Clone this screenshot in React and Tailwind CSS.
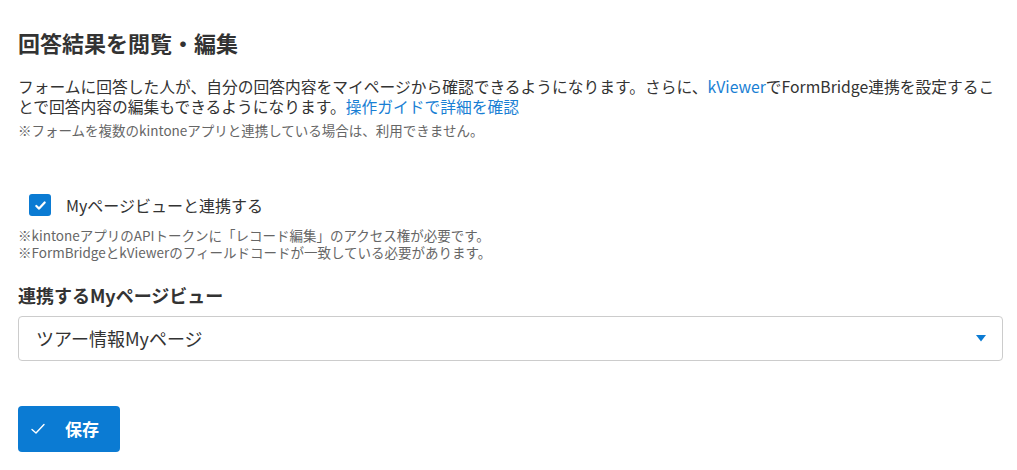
import { useState } from "react";

export default function App() {
  const [linked, setLinked] = useState(true);
  const [view, setView] = useState("tour");

  return (
    <div
      className="min-h-screen bg-white pl-[18px] pr-[14px] pt-[26px] text-[#333333]"
      style={{ fontFamily: '"Noto Sans CJK JP", "Noto Sans", sans-serif' }}
    >
      <h2 className="text-[22px] font-bold leading-[32px]">回答結果を閲覧・編集</h2>

      <p className="mt-[19px] text-[15.75px] leading-[20px]">
        フォームに回答した人が、自分の回答内容をマイページから確認できるようになります。さらに、
        <a className="text-[#1a7fd4]">kViewer</a>
        でFormBridge連携を設定することで回答内容の編集もできるようになります。
        <a className="text-[#1a7fd4]">操作ガイドで詳細を確認</a>
      </p>
      <p className="mt-[4px] text-[13.5px] leading-[18px] text-[#666666]">
        ※フォームを複数のkintoneアプリと連携している場合は、利用できません。
      </p>

      {/* Myページ連携 */}
      <label className="mt-[55px] ml-[11px] flex items-center gap-[15px] cursor-pointer">
        <span
          onClick={() => setLinked(!linked)}
          className={
            linked
              ? "flex h-[22px] w-[22px] items-center justify-center rounded-[3px] bg-[#0b7bd3]"
              : "flex h-[22px] w-[22px] items-center justify-center rounded-[3px] border border-gray-400 bg-white"
          }
        >
          {linked && (
            <svg width="13" height="13" viewBox="0 0 14 14" fill="none">
              <path d="M2.5 7.5 L5.5 10.3 L11.5 3.8" stroke="white" strokeWidth="2.4" strokeLinecap="round" strokeLinejoin="round" />
            </svg>
          )}
        </span>
        <span className="text-[16px] leading-[22px]">Myページビューと連携する</span>
      </label>

      <div className="mt-[11px] text-[13.5px] leading-[17px] text-[#666666]">
        <p>※kintoneアプリのAPIトークンに「レコード編集」のアクセス権が必要です。</p>
        <p>※FormBridgeとkViewerのフィールドコードが一致している必要があります。</p>
      </div>

      <h3 className="mt-[21px] text-[18px] font-bold leading-[26px]">連携するMyページビュー</h3>

      <div className="relative mt-[8px]">
        <select
          value={view}
          onChange={(e) => setView(e.target.value)}
          className="h-[45px] w-full appearance-none rounded-[4px] border border-[#cccccc] bg-white pl-[17px] pr-10 text-[18px] text-[#333333] focus:outline-none"
          style={{ fontFamily: '"Noto Sans CJK JP", sans-serif' }}
        >
          <option value="tour">ツアー情報Myページ</option>
        </select>
        <svg
          className="pointer-events-none absolute right-[17px] top-[19px]"
          width="10"
          height="7"
          viewBox="0 0 10 7"
        >
          <path d="M0 0 H10 L5 6.5 Z" fill="#0b7bd3" />
        </svg>
      </div>

      <button
        type="button"
        className="mt-[45px] flex h-[46px] w-[102px] items-center rounded-[4px] bg-[#0b7bd3] pl-[13px] text-white"
      >
        <svg width="14" height="12" viewBox="0 0 14 12" fill="none">
          <path d="M1 6.5 L5 10 L13 1.5" stroke="white" strokeWidth="1.4" strokeLinecap="round" strokeLinejoin="round" />
        </svg>
        <span className="ml-[20px] text-[17px] font-bold">保存</span>
      </button>
    </div>
  );
}
